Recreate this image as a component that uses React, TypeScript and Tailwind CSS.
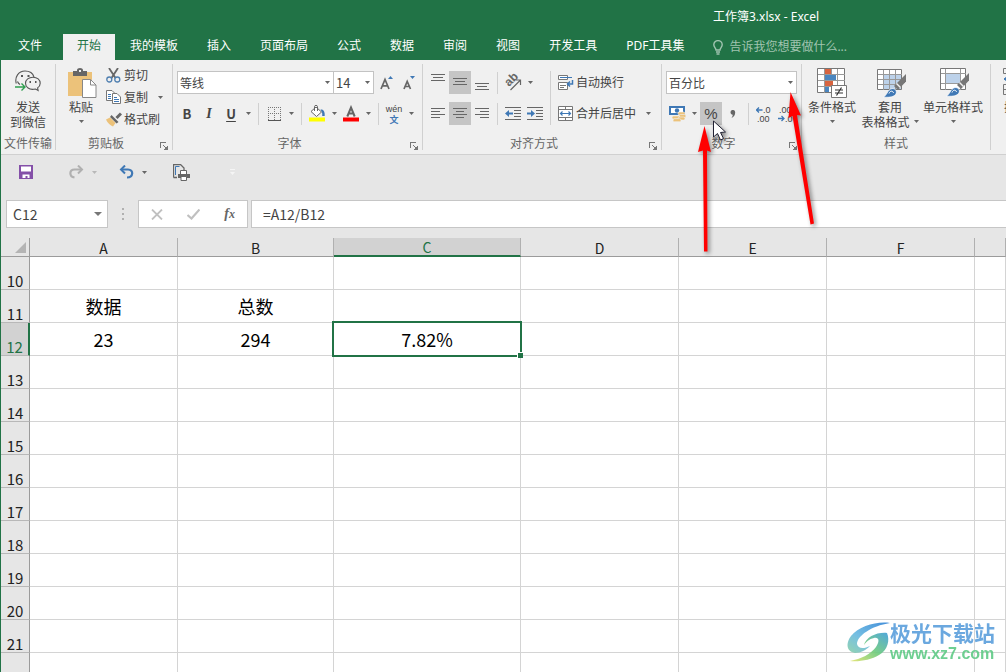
import React from "react";

type Kids = { children?: React.ReactNode };

function Caret({ className = "text-[#666]" }: { className?: string }) {
  return (
    <svg width="5" height="3" viewBox="0 0 5 3" className={`shrink-0 ${className}`} aria-hidden="true">
      <path d="M0 0h5L2.5 3z" fill="currentColor" />
    </svg>
  );
}

function CaretButton({ label }: { label: string }) {
  return (
    <button aria-label={label} className="flex h-[23px] w-3 items-center justify-center">
      <Caret />
    </button>
  );
}

function IconButton({ label, active, children }: Kids & { label: string; active?: boolean }) {
  return (
    <button
      aria-label={label}
      aria-pressed={active}
      className={`flex h-[23px] w-[22px] shrink-0 items-center justify-center ${active ? "bg-[#c5c5c5]" : ""}`}
    >
      {children}
    </button>
  );
}

function Sep() {
  return <div className="mx-1 h-[22px] w-px shrink-0 bg-[#d0d0d0]" />;
}

function Group({ label, launcher, className = "", children }: Kids & { label: string; launcher?: boolean; className?: string }) {
  return (
    <section aria-label={label} className={`flex h-[86px] shrink-0 flex-col border-r border-[#d0d0d0] ${className}`}>
      <div className="flex-1">{children}</div>
      <div className="flex h-[14px] items-center text-[#666]">
        <span className="flex-1 text-center leading-[14px] whitespace-nowrap">{label}</span>
        {launcher && (
          <button aria-label={`${label}设置`} className="flex h-[14px] w-4 items-end justify-center">
            <svg width="8" height="8" viewBox="0 0 8 8" fill="none" stroke="#777" shapeRendering="crispEdges">
              <path d="M.5 6V.5H6M3 3l4 4M7.5 3.5v4h-4" />
              <path d="M5 5h2v2H5z" fill="#777" stroke="none" />
            </svg>
          </button>
        )}
      </div>
    </section>
  );
}

function Combo({ label, value, className }: { label: string; value: string; className: string }) {
  return (
    <div className={`relative h-[23px] ${className}`}>
      <select
        aria-label={label}
        defaultValue={value}
        className="h-full w-full appearance-none border border-[#c3c3c3] bg-white pl-0.5 text-[#444] outline-none"
      >
        <option>{value}</option>
      </select>
      <Caret className="pointer-events-none absolute top-[10px] right-1 text-[#666]" />
    </div>
  );
}

function LinesIcon({ rows }: { rows: [number, number, number][] }) {
  return (
    <svg width="14" height="18" viewBox="0 0 14 18" fill="#666" shapeRendering="crispEdges">
      {rows.map(([x, y, w]) => (
        <rect key={y} x={x} y={y} width={w} height="1" />
      ))}
    </svg>
  );
}

const vTop: [number, number, number][] = [[0, 0, 14], [2, 3, 10], [0, 6, 14]];
const vMid: [number, number, number][] = [[0, 4, 14], [2, 7, 10], [0, 10, 14]];
const vBot: [number, number, number][] = [[0, 9, 14], [2, 12, 10], [0, 15, 14]];
const hLeft: [number, number, number][] = [[0, 3, 14], [0, 6, 9], [0, 9, 14], [0, 12, 9]];
const hMid: [number, number, number][] = [[0, 3, 14], [3, 6, 8], [0, 9, 14], [3, 12, 8]];
const hRight: [number, number, number][] = [[0, 3, 14], [5, 6, 9], [0, 9, 14], [5, 12, 9]];

function WechatIcon() {
  return (
    <svg width="26" height="24" viewBox="0 0 26 24" fill="none" stroke="#555" strokeWidth="1.1">
      <path d="M1.3 13.5C-.6 7 3.5 1 10 1c4.500 0 8 2.500 9 6" />
      <path d="M2.500 11.500C3 13 4 14 5 14.500" />
      <path d="M18 7.200c4.200 0 7.200 2.600 7.200 6 0 2-1 3.600-2.600 4.700l.5 2.600-2.600-1.500c-6.500 1.700-10-2.300-10-5.800 0-3.400 3.300-6 7.500-6z" />
      <path d="M6 6h2M12.500 6h2M14.500 12h1.500M20 12h1.500" strokeWidth="2" />
      <path d="M0 17h9.500M6.500 13.500L10 17l-3.500 3.500" stroke="#2f9e4f" strokeWidth="1.400" />
    </svg>
  );
}

function PasteIcon() {
  return (
    <svg width="29" height="30" viewBox="0 0 29 30">
      <path d="M0 4h24v24H0z" fill="#ecc27a" />
      <path d="M5 3h4V2C9 .8 10.500 0 12 0s3 .8 3 2v1h4v5H5z" fill="#666" />
      <path d="M11 2h2v2h-2z" fill="#eee" />
      <path d="M14.500 11.500h8l5.500 5.500v12.500H14.500z" fill="#fff" stroke="#888" />
      <path d="M22.500 11.500V17H28" fill="none" stroke="#888" />
    </svg>
  );
}

function ScissorsIcon() {
  return (
    <svg width="15" height="15" viewBox="0 0 15 15" fill="none">
      <path d="M3 0l6.500 10M12 0L5.500 10" stroke="#666" strokeWidth="1.800" />
      <circle cx="3.300" cy="11.500" r="2.500" stroke="#4f7fb0" strokeWidth="1.300" />
      <circle cx="11.300" cy="11.500" r="2.500" stroke="#4f7fb0" strokeWidth="1.300" />
    </svg>
  );
}

function CopyIcon() {
  return (
    <svg width="15" height="14" viewBox="0 0 15 14" fill="#fff" stroke="#777">
      <path d="M.5.5H6L8.500 3v7.500h-8z" />
      <path d="M2 4.500h3M2 6.500h3M2 8.500h3" stroke="#3f78b5" />
      <path d="M6.500 3.500H11L14.500 7v6.500h-8z" />
      <path d="M8 7.500h3M8 9.500h5M8 11.500h5" stroke="#3f78b5" />
    </svg>
  );
}

function BrushIcon() {
  return (
    <svg width="16" height="15" viewBox="0 0 16 15">
      <path d="M15 1.500L10.500 6" stroke="#666" strokeWidth="3" />
      <path d="M5.500 3L12.500 10l-2 1.500L4 5z" fill="#666" />
      <path d="M0 7.500l4-2L9.500 11 7 14.500C4.500 13.500 1.500 11 0 7.500z" fill="#ecc27a" />
    </svg>
  );
}

function FontSizeIcon({ up }: { up?: boolean }) {
  return (
    <svg width="14" height="16" viewBox="0 0 14 16">
      <path
        d={up ? "M1 14L5 4.500 9 14M2.500 10.800h5" : "M2 14l3.200-7.500L8.500 14M3.300 11.500h4"}
        fill="none"
        stroke="#666"
        strokeWidth="1.700"
      />
      <path d={up ? "M8 4l2.500-3L13 4z" : "M8 1h5l-2.500 3z"} fill="#3f78b5" />
    </svg>
  );
}

function BorderIcon() {
  return (
    <svg width="13" height="14" viewBox="0 0 13 14" stroke="#777" fill="none" shapeRendering="crispEdges">
      <path d="M0 .5h13M0 6.500h13M.5 0v13M6.500 0v13M12.500 0v13" strokeDasharray="1 1" />
      <path d="M0 13.500h13" stroke="#555" />
    </svg>
  );
}

function FillIcon() {
  return (
    <svg width="17" height="17" viewBox="0 0 17 17">
      <path d="M0 12.500h16v4H0z" fill="#ffff00" />
      <path d="M7 2l5.500 5L7.500 11.500 2 6.500z" fill="#fff" stroke="#666" />
      <path d="M5.500 6V1.500c0-1.500 3-1.500 3 0V6" fill="none" stroke="#666" />
      <path d="M11.500 4.500c3-.5 4.500 2 4.200 6.500h-2.500c.3-3-.2-4-1.700-6.500z" fill="#3f78b5" />
    </svg>
  );
}

function FontColorIcon() {
  return (
    <svg width="16" height="17" viewBox="0 0 16 17">
      <path d="M0 12.500h16v4H0z" fill="#ff0000" />
      <path d="M4.300 11.500L8 2.500l3.700 9M5.500 8.500h5" fill="none" stroke="#666" strokeWidth="2" />
    </svg>
  );
}

function OrientationIcon() {
  return (
    <svg width="20" height="22" viewBox="0 0 20 22" className="shrink-0 overflow-visible">
      <text transform="translate(6 15) rotate(-45)" fontSize="12" fontWeight="600" fill="#666" fontFamily="Liberation Sans, sans-serif">
        ab
      </text>
      <path d="M7.500 18L17 8.500M12.500 8H17.500v5" fill="none" stroke="#666" strokeWidth="1.200" />
    </svg>
  );
}

function IndentIcon({ right }: { right?: boolean }) {
  return (
    <svg width="16" height="14" viewBox="0 0 16 14" fill="none" stroke="#666" shapeRendering="crispEdges">
      <path d="M0 .5h16M9 3.500h7M9 6.500h7M9 9.500h7M0 12.500h16" />
      <path
        d={right ? "M0 5.500h4V3l4 3.500-4 3.500V7.500H0z" : "M8 5.500H4V3L0 6.500 4 10V7.500h4z"}
        fill="#3f78b5"
        stroke="none"
        shapeRendering="auto"
      />
    </svg>
  );
}

function WrapIcon() {
  return (
    <svg width="16" height="15" viewBox="0 0 16 15" fill="#fff" stroke="#777">
      <path d="M.5.5h9v4h-9zM.5 7.500h9v7h-9z" />
      <path d="M2 2.500h12" stroke="#3f78b5" />
      <path d="M2 10.500h6M2 12.500h4" />
      <path d="M14.500 5v4H10M12 6.500L9.500 9l2.500 2.500" stroke="#3f78b5" strokeWidth="1.500" fill="none" />
    </svg>
  );
}

function MergeIcon() {
  return (
    <svg width="15" height="15" viewBox="0 0 15 15" fill="#fff" stroke="#777">
      <path d="M.5.5h14v14H.5zM.5 3.500h14M.5 11.500h14M7.500.5v3M7.500 11.500v3" />
      <path d="M2 7.500h11M4.500 5.500l-2 2 2 2M10.500 5.500l2 2-2 2" stroke="#3f78b5" strokeWidth="1.200" fill="none" />
    </svg>
  );
}

function CurrencyIcon() {
  return (
    <svg width="17" height="16" viewBox="0 0 17 16">
      <path d="M0 0h16v9H0z" fill="#3f78b5" />
      <path d="M2 2h12v5H2z" fill="#fff" />
      <circle cx="8" cy="4.500" r="2.200" fill="#3f78b5" />
      <g fill="#ecc27a" stroke="#f0f0f0" strokeWidth=".6">
        <rect x="9" y="6" width="7" height="3" rx="1.500" />
        <rect x="10" y="8.500" width="7" height="3" rx="1.500" />
        <rect x="3" y="10" width="8" height="3" rx="1.500" />
        <rect x="9" y="11" width="7" height="3" rx="1.500" />
        <rect x="4" y="12.700" width="8" height="3" rx="1.500" />
      </g>
    </svg>
  );
}

function DecimalIcon({ less }: { less?: boolean }) {
  return (
    <svg width="16" height="20" viewBox="0 0 16 20" fontSize="9" fill="#444" fontFamily="Liberation Sans, sans-serif">
      <text x={less ? "1" : "7"} y="9">{less ? ".00" : ".0"}</text>
      <text x={less ? "7" : "1"} y="18">{less ? ".0" : ".00"}</text>
      <path
        d={less ? "M0 14.500h6M3.500 12l2.500 2.500L3.500 17" : "M6.500 6H.5M3 3.500L.5 6 3 8.500"}
        stroke="#3f78b5"
        strokeWidth="1.300"
        fill="none"
      />
    </svg>
  );
}

function ConditionalIcon() {
  return (
    <svg width="30" height="30" viewBox="0 0 30 30">
      <path d="M.5.500h27v24H.5z" fill="#fff" stroke="#777" />
      <path d="M.5 6.500h27M.5 12.500h27M.5 18.500h27M7.500.500v24M14.500.500v24M20.500.500v24" fill="none" stroke="#999" shapeRendering="crispEdges" />
      <path d="M8 1h6v5H8zM8 13h8v5H8z" fill="#d8643f" />
      <path d="M8 7h11v5H8zM8 19h4v5H8z" fill="#4a86c0" />
      <path d="M14.500 17.500h15v12h-15z" fill="#fff" stroke="#777" />
      <path d="M18 22h8M18 25h8M24.500 19.500l-5 8" stroke="#333" strokeWidth="1.200" />
    </svg>
  );
}

function StyleBrush() {
  return (
    <>
      <path d="M29 5v7.500L21 21l-4-4z" fill="#777" />
      <path d="M19.500 14.500l4 4" stroke="#f0f0f0" strokeWidth="1.500" />
      <path d="M6 28c4-1 4-7 9-8.500 4 0 5.500 3.500 3.500 6C16 28.500 11 28.500 6 28z" fill="#3f78b5" stroke="#fff" strokeWidth=".7" />
      <path d="M12 24.500c1-3 4-3 4.500-.5" stroke="#fff" fill="none" />
    </>
  );
}

function TableStyleIcon() {
  return (
    <svg width="30" height="30" viewBox="0 -1 30 30">
      <path d="M.5.500h24v20H.5z" fill="#fff" stroke="#777" />
      <path d="M7 6h17v14H7z" fill="#bdd2ea" />
      <path d="M.5 5.500h24M.5 10.500h24M.5 15.500h24M6.500.500v20M12.500.500v20M18.500.500v20" fill="none" stroke="#999" shapeRendering="crispEdges" />
      <StyleBrush />
    </svg>
  );
}

function CellStyleIcon() {
  return (
    <svg width="30" height="29" viewBox="0 0 30 29">
      <path d="M.5.500h25v21H.5z" fill="#fff" stroke="#777" />
      <path d="M.5 5.500h25M.5 15.500h25M5.500.500v21M20.500.500v21" fill="none" stroke="#999" shapeRendering="crispEdges" />
      <path d="M6 6h14v9H6z" fill="#bdd2ea" />
      <StyleBrush />
    </svg>
  );
}

function RedoIcon({ className }: { className: string }) {
  return (
    <svg width="15" height="14" viewBox="0 0 15 14" fill="none" stroke="currentColor" className={className}>
      <path d="M13 4.500H5.500C0 4.500 0 11.500 5.500 12.500" strokeWidth="2.200" />
      <path d="M9 .5L13 4.500 9 8.500" strokeWidth="2" />
    </svg>
  );
}

function UndoIcon({ className }: { className: string }) {
  return (
    <svg width="15" height="14" viewBox="0 0 15 14" fill="none" stroke="currentColor" className={className}>
      <path d="M2 4.500h7c6 0 5.500 8-1 8" strokeWidth="2.200" />
      <path d="M6 .5L2 4.500l4 4" strokeWidth="2" />
    </svg>
  );
}

function BigButton({ icon, lines, caret, className }: { icon: React.ReactNode; lines: string[]; caret?: "below" | "inline"; className: string }) {
  return (
    <button className={`flex flex-col items-center pt-1 ${className}`}>
      <span className="flex h-[31px] items-start justify-center">{icon}</span>
      {lines.map((l, i) => (
        <span key={l} className="flex h-[15px] items-center gap-1 leading-[15px] whitespace-nowrap">
          {l}
          {caret === "inline" && i === lines.length - 1 && <Caret />}
        </span>
      ))}
      {caret === "below" && (
        <span className="flex h-[15px] items-center">
          <Caret />
        </span>
      )}
    </button>
  );
}

function SmallButton({ icon, text, caret }: { icon: React.ReactNode; text: string; caret?: boolean }) {
  return (
    <button className="flex h-[22px] items-center whitespace-nowrap">
      <span className="flex w-[18px] items-center">{icon}</span>
      {text}
      {caret && <span className="ml-[10px]"><Caret /></span>}
    </button>
  );
}

const tabs = ["开始", "我的模板", "插入", "页面布局", "公式", "数据", "审阅", "视图", "开发工具", "PDF工具集"];

function TitleBar() {
  return (
    <header className="bg-[#217346] font-['Noto_Sans','Noto_Sans_CJK_SC',sans-serif] text-white">
      <h1 className="flex h-[34px] items-center pl-[713px] text-xs whitespace-nowrap">工作簿3.xlsx - Excel</h1>
      <nav className="flex h-[26px] text-xs whitespace-nowrap">
        <button className="w-[60px] shrink-0 pb-0.5">文件</button>
        <div className="flex shrink-0 gap-px pl-[3px]">
          {tabs.map((t, i) => (
            <button key={t} className={`px-[14px] pb-0.5 ${i === 0 ? "bg-[#f0f0f0] text-[#217346]" : ""}`}>
              {t}
            </button>
          ))}
        </div>
        <label className="ml-[15px] flex items-center gap-1.5 text-[#a0c4b0]">
          <svg width="10" height="15" viewBox="0 0 10 15" fill="none" stroke="currentColor" strokeWidth="1.400">
            <path d="M3 10C3 8 .8 7 .8 4.800a4.200 4.200 0 018.400 0C9.200 7 7 8 7 10zM3 12h4M3.500 14h3" />
          </svg>
          <input aria-label="告诉我" placeholder="告诉我您想要做什么..." className="w-40 bg-transparent outline-none placeholder:text-[#a0c4b0]" />
        </label>
      </nav>
    </header>
  );
}

function Ribbon() {
  return (
    <div className="flex overflow-hidden border-b border-[#d0d0d0] bg-[#f0f0f0] py-1 text-xs text-[#444]">
      <Group label="文件传输" className="w-[55px]">
        <BigButton icon={<span className="pt-0.5"><WechatIcon /></span>} lines={["发送", "到微信"]} className="w-full" />
      </Group>

      <Group label="剪贴板" launcher className="w-[117px]">
        <div className="flex">
          <BigButton icon={<span className="pl-0.5"><PasteIcon /></span>} lines={["粘贴"]} caret="below" className="w-[50px]" />
          <div className="flex flex-col">
            <SmallButton icon={<ScissorsIcon />} text="剪切" />
            <SmallButton icon={<CopyIcon />} text="复制" caret />
            <SmallButton icon={<BrushIcon />} text="格式刷" />
          </div>
        </div>
      </Group>

      <Group label="字体" launcher className="w-[250px]">
        <div className="flex flex-col gap-2 pt-[7px]">
          <div className="flex pl-1">
            <Combo label="字体" value="等线" className="w-[157px]" />
            <Combo label="字号" value="14" className="-ml-px w-[41px] text-[13px]" />
            <div className="ml-[2px] flex">
              <IconButton label="增大字号"><FontSizeIcon up /></IconButton>
              <IconButton label="减小字号"><FontSizeIcon /></IconButton>
            </div>
          </div>
          <div className="flex items-center pl-[3px]">
            <IconButton label="加粗"><span className="text-[13px] leading-5 font-bold">B</span></IconButton>
            <IconButton label="倾斜"><span className="font-['Liberation_Serif',serif] text-sm font-bold italic">I</span></IconButton>
            <IconButton label="下划线"><span className="text-[13px] leading-5 font-bold underline underline-offset-2">U</span></IconButton>
            <CaretButton label="下划线选项" />
            <Sep />
            <IconButton label="边框"><BorderIcon /></IconButton>
            <CaretButton label="边框选项" />
            <Sep />
            <IconButton label="填充颜色"><FillIcon /></IconButton>
            <CaretButton label="填充颜色选项" />
            <IconButton label="字体颜色"><FontColorIcon /></IconButton>
            <CaretButton label="字体颜色选项" />
            <Sep />
            <IconButton label="拼音">
              <svg width="20" height="22" viewBox="0 0 20 22" className="shrink-0 overflow-visible" textAnchor="middle">
                <text x="10" y="9" fontSize="9" fill="#444" fontFamily="Liberation Sans, sans-serif">wén</text>
                <text x="10" y="20" fontSize="9" fontWeight="700" fill="#3f78b5">文</text>
              </svg>
            </IconButton>
            <CaretButton label="拼音选项" />
          </div>
        </div>
      </Group>

      <Group label="对齐方式" launcher className="w-[239px]">
        <div className="flex pt-[7px] pl-1">
          <div className="flex flex-col gap-2">
            <div className="flex items-center">
              <IconButton label="顶端对齐"><LinesIcon rows={vTop} /></IconButton>
              <IconButton label="垂直居中" active><LinesIcon rows={vMid} /></IconButton>
              <IconButton label="底端对齐"><LinesIcon rows={vBot} /></IconButton>
              <Sep />
              <IconButton label="方向"><OrientationIcon /></IconButton>
              <CaretButton label="方向选项" />
            </div>
            <div className="flex items-center">
              <IconButton label="左对齐"><LinesIcon rows={hLeft} /></IconButton>
              <IconButton label="居中" active><LinesIcon rows={hMid} /></IconButton>
              <IconButton label="右对齐"><LinesIcon rows={hRight} /></IconButton>
              <Sep />
              <IconButton label="减少缩进量"><IndentIcon /></IconButton>
              <IconButton label="增加缩进量"><IndentIcon right /></IconButton>
            </div>
          </div>
          <div className="mr-[7px] ml-1 w-px bg-[#d0d0d0]" />
          <div className="flex flex-col gap-[9px]">
            <SmallButton icon={<WrapIcon />} text="自动换行" />
            <SmallButton icon={<MergeIcon />} text="合并后居中" caret />
          </div>
        </div>
      </Group>

      <Group label="数字" launcher className="w-[140px]">
        <div className="flex flex-col gap-2 pt-[7px]">
          <div className="pl-1">
            <Combo label="数字格式" value="百分比" className="w-[131px]" />
          </div>
          <div className="flex items-center pl-1">
            <IconButton label="会计数字格式"><CurrencyIcon /></IconButton>
            <CaretButton label="会计数字格式选项" />
            <IconButton label="百分比样式" active><span className="font-['Liberation_Sans',sans-serif] text-[15px] leading-5">%</span></IconButton>
            <IconButton label="千位分隔样式">
              <svg width="6" height="8" viewBox="0 0 6 8"><path d="M.5 2.300a2.300 2.300 0 014.700 0C5.200 5 4 7 1.500 8c1-1.500 1.300-2.500 1.200-3.300C1.500 4.700.5 3.700.5 2.300z" fill="#666" /></svg>
            </IconButton>
            <Sep />
            <IconButton label="增加小数位数"><DecimalIcon /></IconButton>
            <IconButton label="减少小数位数"><DecimalIcon less /></IconButton>
          </div>
        </div>
      </Group>

      <Group label="样式" className="w-[189px]">
        <div className="flex pl-0.5">
          <BigButton icon={<ConditionalIcon />} lines={["条件格式"]} caret="below" className="w-[56px]" />
          <BigButton icon={<span className="pl-1"><TableStyleIcon /></span>} lines={["套用", "表格格式"]} caret="inline" className="w-[60px]" />
          <BigButton icon={<span className="pl-1"><CellStyleIcon /></span>} lines={["单元格样式"]} caret="below" className="w-[66px]" />
        </div>
      </Group>

      <div className="w-12 shrink-0 pl-3">
        <BigButton
          icon={
            <svg width="26" height="29" viewBox="0 0 26 29" fill="none" stroke="#777">
              <path d="M.5.500h25v5H.5zM.5 16.500h25v10H.5zM.5 21.500h25" />
              <path d="M5 8L1 11l4 3z" fill="#3f78b5" stroke="#3f78b5" />
            </svg>
          }
          lines={["插入"]}
          className="w-[26px]"
        />
      </div>
    </div>
  );
}

function QuickAccess() {
  return (
    <div className="flex h-[34px] items-center pl-[18px]">
      <button aria-label="保存">
        <svg width="14" height="14" viewBox="0 0 14 14">
          <path d="M0 0h14v14H0z" fill="#8450a8" />
          <path d="M2 1.500h10v5H2zM3.500 9.500h7V13H8.500v-2h-2v2h-3z" fill="#fff" />
        </svg>
      </button>
      <button aria-label="恢复" className="ml-9 flex items-center gap-2 text-[#b0b0b0]">
        <RedoIcon className="text-[#b0b0b0]" />
        <Caret className="text-[#b8b8b8]" />
      </button>
      <button aria-label="撤消" className="ml-[22px] flex items-center gap-2">
        <UndoIcon className="text-[#3f78b5]" />
        <Caret />
      </button>
      <button aria-label="打印预览" className="ml-[26px]">
        <svg width="17" height="17" viewBox="0 0 17 17" fill="none" stroke="#666">
          <path d="M.5 13.500V.500h7L11 4v2M.5 13.500H4" strokeWidth="1.300" />
          <path d="M2.500 11V2.500h4" stroke="#3f78b5" />
          <path d="M7.500 6.500h6v4h-6z" fill="#fff" />
          <path d="M5 10h12v4H5z" fill="#666" stroke="none" />
          <path d="M8 12.500h5.500v4H8z" fill="#fff" />
        </svg>
      </button>
      <button aria-label="自定义快速访问工具栏" className="ml-10 flex flex-col items-center gap-0.5">
        <span className="h-px w-[5px] bg-[#f5f5f5]" />
        <Caret className="text-[#f5f5f5]" />
      </button>
    </div>
  );
}

function FormulaBar() {
  return (
    <div className="flex items-center pt-[11px] pb-[10px] pl-[5px] text-sm text-[#444]">
      <div className="relative h-7 w-[102px] shrink-0 border border-[#c6c6c6] bg-white">
        <input aria-label="名称框" defaultValue="C12" className="h-full w-full bg-transparent pl-1.5 outline-none" />
        <svg width="8" height="4" viewBox="0 0 8 4" className="pointer-events-none absolute top-[11px] right-[5px]">
          <path d="M0 0h8L4 4z" fill="#777" />
        </svg>
      </div>
      <div className="flex w-[30px] shrink-0 flex-col items-center gap-[3px]">
        <span className="size-0.5 bg-[#b0b0b0]" />
        <span className="size-0.5 bg-[#b0b0b0]" />
        <span className="size-0.5 bg-[#b0b0b0]" />
      </div>
      <div className="flex h-7 w-[110px] shrink-0 items-center justify-around border border-[#c6c6c6] bg-white">
        <button aria-label="取消">
          <svg width="12" height="11" viewBox="0 0 12 11"><path d="M1 .5l10 10M11 .5l-10 10" stroke="#c0c0c0" strokeWidth="1.800" /></svg>
        </button>
        <button aria-label="输入">
          <svg width="13" height="11" viewBox="0 0 13 11"><path d="M.5 6L4.500 9.500 12.500.500" fill="none" stroke="#c0c0c0" strokeWidth="2.200" /></svg>
        </button>
        <button aria-label="插入函数" className="font-['Liberation_Serif',serif] text-sm leading-none font-bold text-[#666] italic">
          f<span className="text-xs">x</span>
        </button>
      </div>
      <input
        aria-label="编辑栏"
        defaultValue="=A12/B12"
        className="ml-[3px] h-7 min-w-0 flex-1 border border-r-0 border-[#c6c6c6] bg-white pl-[11px] outline-none"
      />
    </div>
  );
}

const cols = ["A", "B", "C", "D", "E", "F", ""];
const rows = [10, 11, 12, 13, 14, 15, 16, 17, 18, 19, 20, 21, 22];
const cells: Record<string, string> = { A11: "数据", B11: "总数", A12: "23", B12: "294", C12: "7.82%" };

function Sheet() {
  return (
    <table className="w-full table-fixed border-separate border-spacing-0 text-center">
      <colgroup>
        <col className="w-[29px]" />
        <col className="w-[148px]" />
        <col className="w-[156px]" />
        <col className="w-[187px]" />
        <col className="w-[158px]" />
        <col className="w-[148px]" />
        <col className="w-[148px]" />
        <col />
      </colgroup>
      <thead>
        <tr className="h-[19px] text-sm leading-[15px]">
          <th aria-label="全选" className="border-r border-b border-[#9b9b9b] bg-[#e6e6e6] p-0">
            <svg width="11" height="11" viewBox="0 0 11 11" className="mr-[3px] ml-auto"><path d="M11 0v11H0z" fill="#b4b4b4" /></svg>
          </th>
          {cols.map((c) => (
            <th
              key={c}
              scope="col"
              className={`border-r p-0 pt-0.5 font-normal ${
                c === "C"
                  ? "border-b-2 border-r-[#b0b0b0] border-b-[#217346] bg-[#d2d2d2] text-[#217346]"
                  : "border-b border-r-[#b0b0b0] border-b-[#9b9b9b] bg-[#e6e6e6] text-[#222]"
              }`}
            >
              {c}
            </th>
          ))}
        </tr>
      </thead>
      <tbody>
        {rows.map((r) => (
          <tr key={r} className="h-[33px]">
            <th
              scope="row"
              className={`border-b border-b-[#b8b8b8] p-0 align-bottom text-[15px] leading-[17px] font-normal ${
                r === 12
                  ? "border-r-2 border-r-[#217346] bg-[#d2d2d2] text-[#217346]"
                  : "border-r border-r-[#9b9b9b] bg-[#e6e6e6] text-[#222]"
              }`}
            >
              {r}
            </th>
            {cols.map((c) => (
              <td
                key={c}
                className={`relative border-r border-b border-[#d4d4d4] bg-white p-0 text-lg leading-8 text-black ${
                  c + r === "C12" ? "z-10" : ""
                }`}
              >
                {cells[c + r]}
                {c + r === "C12" && (
                  <span className="pointer-events-none absolute -inset-0.5 border-2 border-[#217346]">
                    <span className="absolute -right-[3px] -bottom-[3px] size-[6px] border-t border-l border-white bg-[#217346]" />
                  </span>
                )}
              </td>
            ))}
          </tr>
        ))}
      </tbody>
    </table>
  );
}

function Pointers() {
  return (
    <svg width="140" height="180" viewBox="0 0 140 180" className="pointer-events-none absolute top-20 left-[685px] z-20 drop-shadow-[2px_2px_2px_rgba(0,0,0,0.45)]">
      <path d="M28.500 41v16l4-3.500 3 6.500 3-1.500-3-6 5-.5z" fill="#fff" stroke="#223" strokeWidth="1" />
      <path d="M19.500 46L26 72l-4-1.500.5 101h-3.500L18 70.500 13 72z" fill="#f00" />
      <path d="M105.500 12L116 35.500l-4-.5 17 108.500-3.500 1L107.500 36l-4 2z" fill="#f00" />
    </svg>
  );
}

function Watermark() {
  return (
    <div className="pointer-events-none absolute right-[11px] bottom-2 z-20 flex items-center opacity-90">
      <svg width="43" height="40" viewBox="0 0 43 40">
        <defs>
          <linearGradient id="swirlBlue" x1="1" y1="0" x2="0" y2="1">
            <stop offset="0" stopColor="#2f82d6" />
            <stop offset=".6" stopColor="#67b9e0" />
            <stop offset="1" stopColor="#8ad0a8" />
          </linearGradient>
          <linearGradient id="swirlGreen" x1="1" y1="0" x2="0" y2="1">
            <stop offset="0" stopColor="#3f9fd8" />
            <stop offset=".5" stopColor="#6cca7c" />
            <stop offset="1" stopColor="#e3e36b" />
          </linearGradient>
        </defs>
        <path d="M43 1C30-1 12 4 4 14-2 22 0 30 8 31c6 0 11-3 15-7-6 3-12 3-13-2C10 14 24 4 43 1z" fill="url(#swirlBlue)" />
        <path d="M40 11c3 7 1 17-8 22-8 5-20 7-29 6 11-2 21-7 26-14 4-6 3-10-2-9-5 1-8 4-10 7 2-8 13-13 23-12z" fill="url(#swirlGreen)" />
      </svg>
      <div className="flex flex-col whitespace-nowrap">
        <span className="text-[21px] leading-6 font-bold text-[#5b9fdc]">极光下载站</span>
        <span className="font-['Liberation_Sans',sans-serif] text-base leading-[20px] font-bold text-[#5fca86]">www.xz7.com</span>
      </div>
    </div>
  );
}

export default function App() {
  return (
    <div className="relative flex h-screen flex-col overflow-hidden bg-[#e6e6e6] font-['Noto_Sans_CJK_SC',sans-serif]">
      <TitleBar />
      <main className="flex min-h-0 flex-1 flex-col border-l border-[#217346]">
        <Ribbon />
        <QuickAccess />
        <FormulaBar />
        <div className="min-h-0 flex-1 overflow-hidden">
          <Sheet />
        </div>
      </main>
      <Pointers />
      <Watermark />
    </div>
  );
}
